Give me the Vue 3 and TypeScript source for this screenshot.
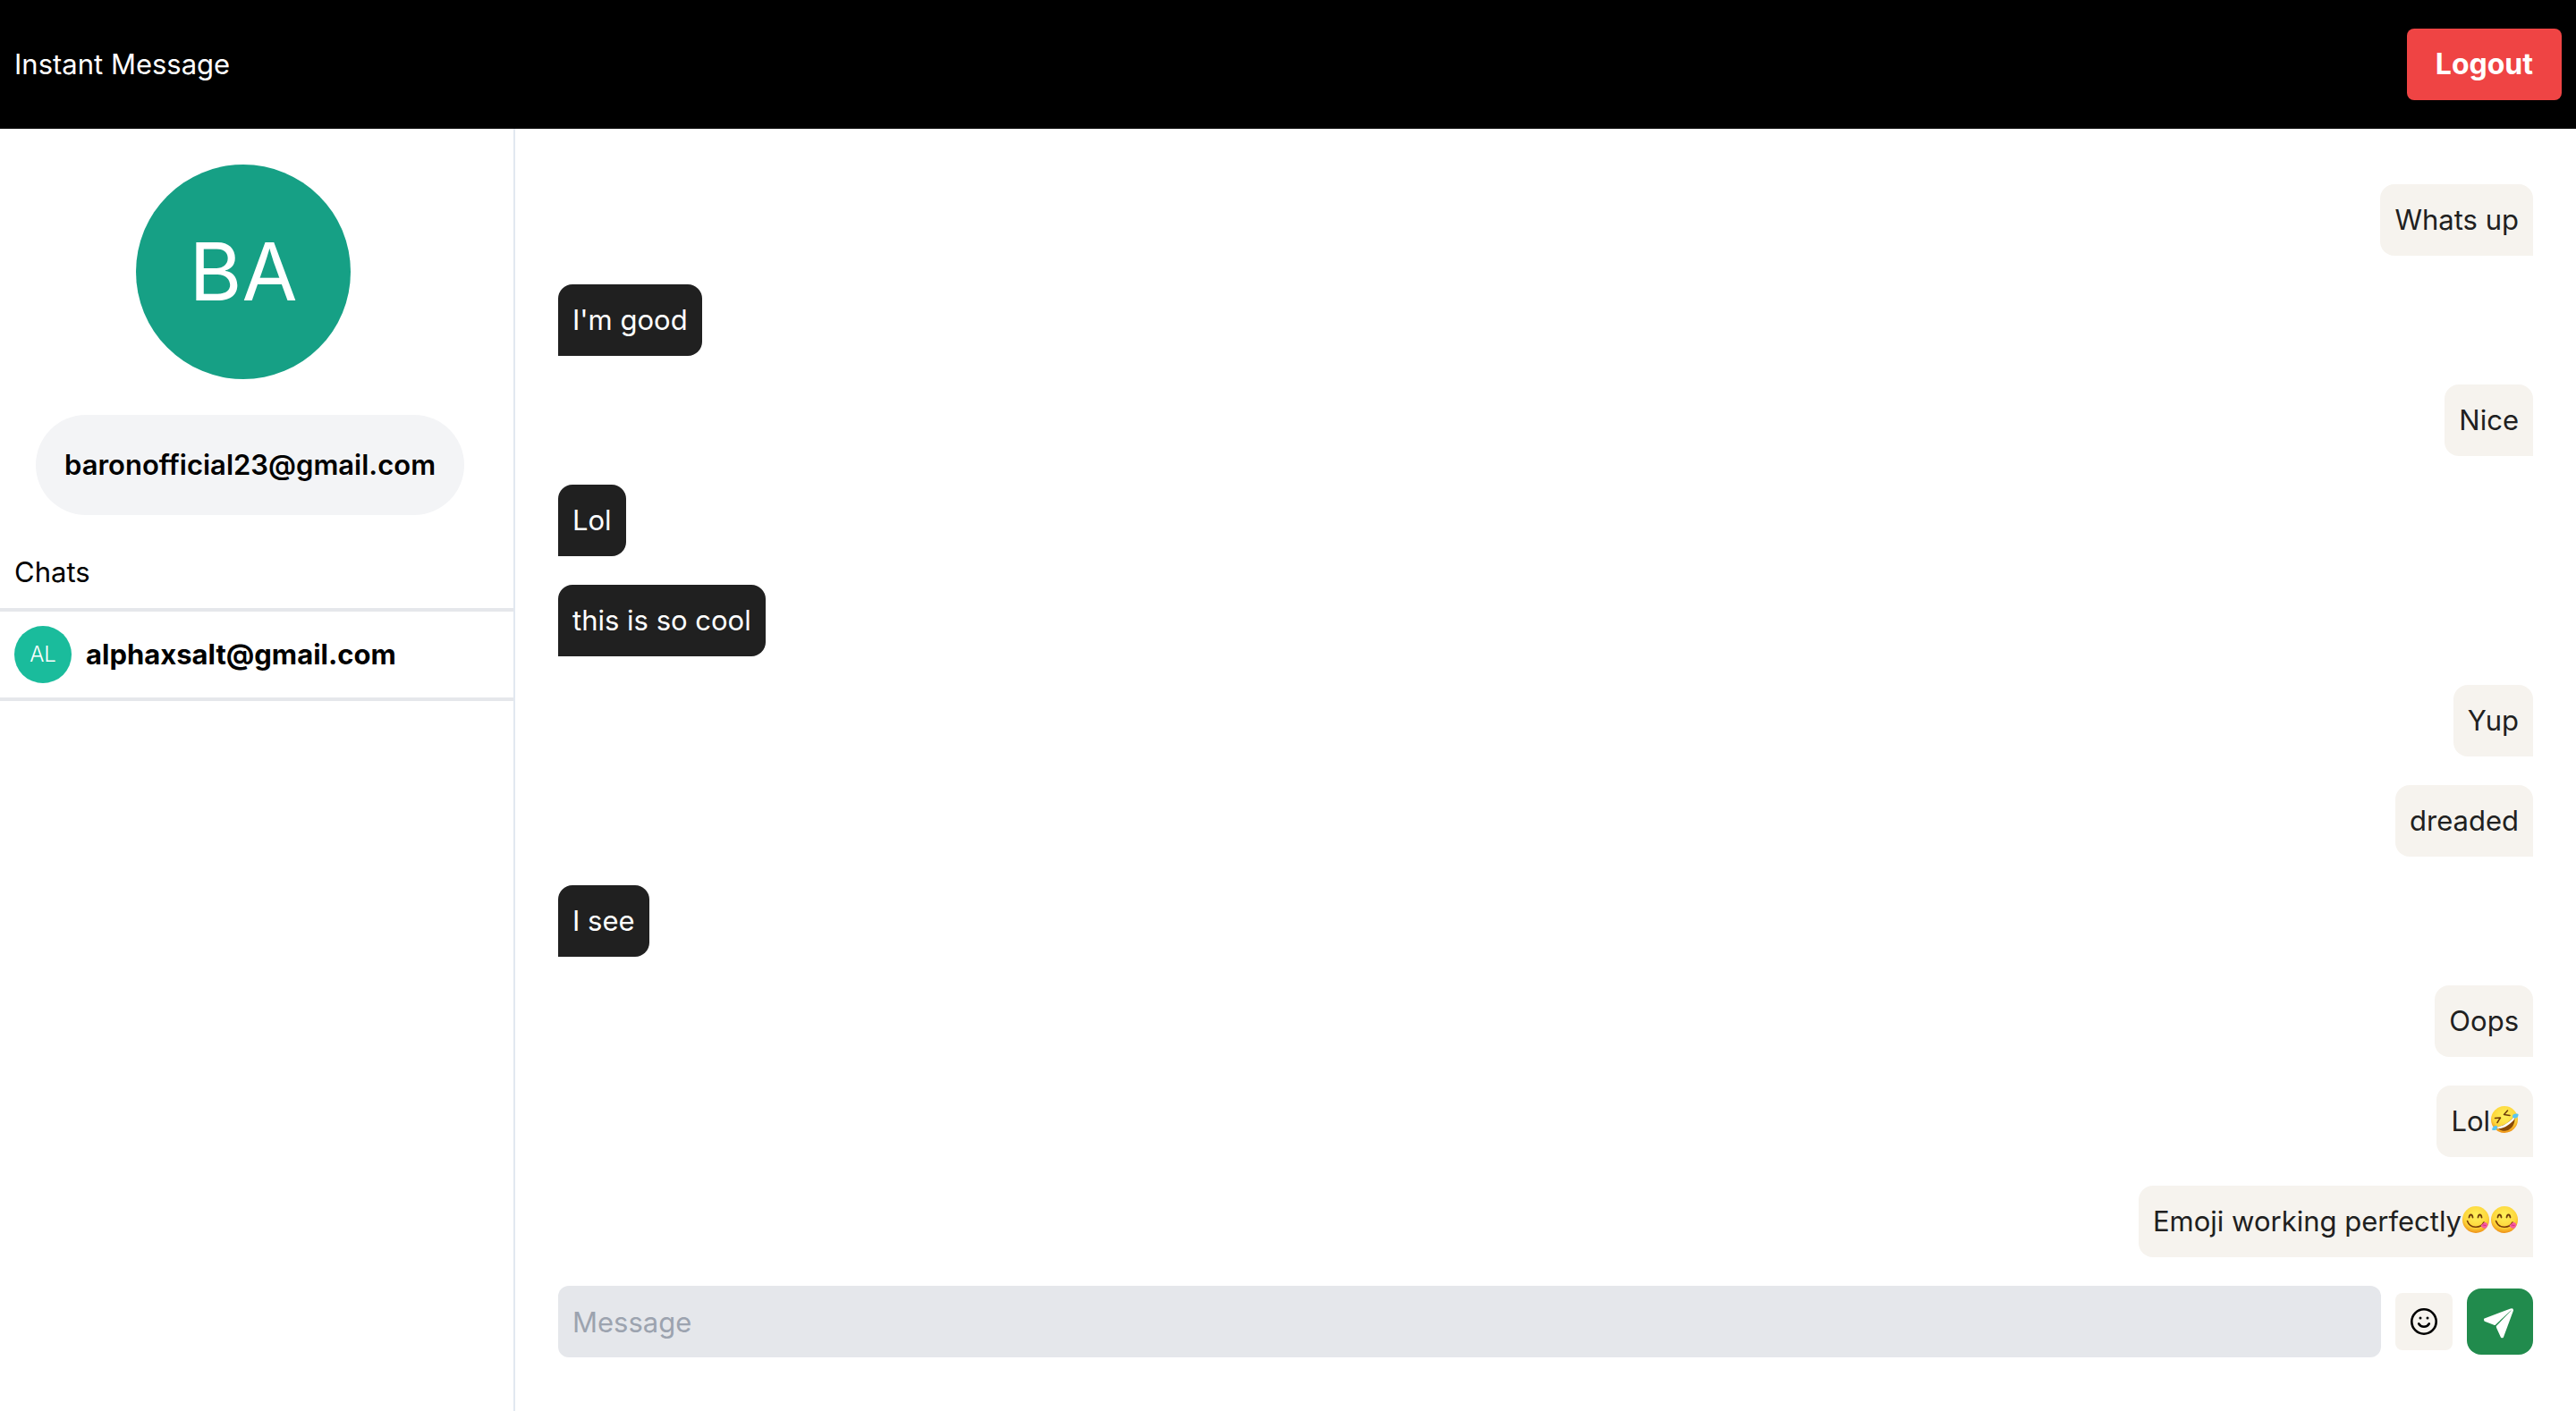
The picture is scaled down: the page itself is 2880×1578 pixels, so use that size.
<script setup lang="ts">
import { ref } from 'vue'

type Emoji = 'rofl' | 'yum'
interface Message {
  text: string
  mine: boolean
  emojis?: Emoji[]
}

const draft = ref('')
const messages: Message[] = [
  { text: 'Whats up', mine: true },
  { text: "I'm good", mine: false },
  { text: 'Nice', mine: true },
  { text: 'Lol', mine: false },
  { text: 'this is so cool', mine: false },
  { text: 'Yup', mine: true },
  { text: 'dreaded', mine: true },
  { text: 'I see', mine: false },
  { text: 'Oops', mine: true },
  { text: 'Lol', mine: true, emojis: ['rofl'] },
  { text: 'Emoji working perfectly', mine: true, emojis: ['yum', 'yum'] },
]
</script>

<template>
  <div class="app">
    <header class="topbar">
      <span>Instant Message</span>
      <button class="logout" type="button">Logout</button>
    </header>

    <div class="body">
      <aside class="sidebar">
        <div class="profile">
          <div class="avatar avatar-large">BA</div>
          <div class="email">baronofficial23@gmail.com</div>
        </div>
        <div class="chats-title">Chats</div>
        <a class="chat" href="#">
          <span class="avatar avatar-small">AL</span>
          <span>alphaxsalt@gmail.com</span>
        </a>
      </aside>

      <main class="conversation">
        <div v-for="(m, i) in messages" :key="i" class="bubble" :class="m.mine ? 'mine' : 'theirs'">
          <span>{{ m.text }}</span>
          <template v-for="(e, j) in m.emojis" :key="j">
            <svg v-if="e === 'rofl'" class="emoji" viewBox="0 0 32 32" role="img" aria-label="rolling on the floor laughing">
              <defs>
                <radialGradient id="face-rofl" cx="0.5" cy="0.35" r="0.65">
                  <stop offset="0" stop-color="#fff25a" />
                  <stop offset="0.7" stop-color="#fdd43a" />
                  <stop offset="1" stop-color="#ee8f14" />
                </radialGradient>
              </defs>
              <circle cx="16" cy="16" r="15" fill="url(#face-rofl)" />
              <path d="M5.500 14.500l6-.5-3.500 5.500M19.500 6l-4 4.500 6.500 1" fill="none" stroke="#6f3c0a" stroke-width="1.500" stroke-linecap="round" stroke-linejoin="round" />
              <path d="M7 24.500C14 24 22 19 27 12c2 7-2 15-9 16.500-4.500 1-8-1-11-4z" fill="#8a4a08" />
              <path d="M7 24.500C14 24 22 19 27 12.500l.3 2.800C23 21.500 16 25.800 9 26.300z" fill="#fff" />
              <path d="M25 12.500c0-2.500 3-3.500 6.500-2.500.500 3-2 5-4 4.500-1.500 0-2.500-.500-2.500-2zM7.500 23c-2.500-.500-5 1-5.500 4.500 2.500 1 5 .5 5.500-1 .500-1 .500-2.500 0-3.500z" fill="#59c5f2" />
            </svg>
            <svg v-else class="emoji" viewBox="0 0 32 32" role="img" aria-label="face savoring food">
              <defs>
                <radialGradient id="face-yum" cx="0.5" cy="0.35" r="0.65">
                  <stop offset="0" stop-color="#fff25a" />
                  <stop offset="0.7" stop-color="#fdd43a" />
                  <stop offset="1" stop-color="#ee8f14" />
                </radialGradient>
              </defs>
              <circle cx="16" cy="16" r="15" fill="url(#face-yum)" />
              <path d="M8.500 13.500c.5-4 3.500-4 4 0M18.500 13.500c.5-4 3.500-4 4 0" fill="none" stroke="#6f3c0a" stroke-width="1.800" stroke-linecap="round" />
              <path d="M6.500 17.500c3 8.500 14.500 9 18.500 1.500" fill="none" stroke="#7a3c08" stroke-width="1.600" stroke-linecap="round" />
              <path d="M21.500 22.500l4-3.500c2.500 0 4.500 2 3.500 4-1 3-4 3.500-5.500 2-1-.7-1.700-1.500-2-2.500z" fill="#f75b9d" />
              <path d="M24 22l3 .5" stroke="#d42f7c" stroke-width="1" stroke-linecap="round" />
            </svg>
          </template>
        </div>

        <form class="composer" @submit.prevent>
          <input v-model="draft" type="text" placeholder="Message" aria-label="Message" />
          <button class="smile" type="button" aria-label="Insert emoji">
            <svg viewBox="0 0 32 32" width="32" height="32" fill="none" stroke="#000" stroke-width="2.600">
              <circle cx="16" cy="16" r="13.700" />
              <path d="M10.200 18.400c2.400 4.500 9.200 4.500 11.600 0" stroke-linecap="round" />
              <circle cx="12" cy="12" r="1.500" fill="#000" stroke="none" />
              <circle cx="20" cy="12" r="1.500" fill="#000" stroke="none" />
            </svg>
          </button>
          <button class="send" type="submit" aria-label="Send">
            <svg viewBox="0 0 48 48" width="48" height="48" fill="#fff" stroke="#fff" stroke-width="2" stroke-linejoin="round">
              <path d="M7 21.500L35.500 10.700 18.200 27 7.200 22.700z" />
              <path d="M38 11.500L27 41.200H25.800L21 30.500 20.800 29.500z" />
              <path d="M35.500 10.700L37.500 10.200 38 11.500" />
            </svg>
          </button>
        </form>
      </main>
    </div>
  </div>
</template>

<style>
body {
  background: #fff;
}
</style>

<style scoped>
.app {
  display: flex;
  flex-direction: column;
  min-height: 100vh;
  font-family: Inter, "Liberation Sans", sans-serif;
  font-size: 31px;
  line-height: 48px;
  color: #000;
}

.app * {
  box-sizing: border-box;
}

button,
input {
  border: 0;
  font: inherit;
}

.topbar {
  display: flex;
  align-items: center;
  justify-content: space-between;
  padding: 32px 16px;
  background: #000;
  color: #fff;
}

.logout {
  padding: 16px 32px;
  border-radius: 8px;
  background: #ef4444;
  color: #fff;
  font-size: 32px;
  font-weight: 700;
}

.body {
  display: flex;
  flex: 1;
}

.sidebar {
  flex: none;
  width: 20%;
  border-right: 2px solid #e2e8f0;
}

.profile {
  display: flex;
  flex-direction: column;
  align-items: flex-start;
  gap: 40px;
  padding: 40px 40px 24px;
}

.avatar {
  display: flex;
  align-items: center;
  justify-content: center;
  flex: none;
  border-radius: 50%;
  color: #fff;
  font-weight: 400;
}

.avatar-large {
  width: 240px;
  height: 240px;
  margin-left: 112px;
  background: #16a085;
  font-size: 90px;
}

.avatar-small {
  width: 64px;
  height: 64px;
  background: #1abc9c;
  font-size: 24px;
  font-weight: 300;
}

.email {
  padding: 32px;
  border-radius: 56px;
  background: #f3f4f6;
  font-weight: 600;
}

.chats-title {
  padding: 16px;
  border-bottom: 4px solid #e5e7eb;
}

.chat {
  display: flex;
  align-items: center;
  gap: 16px;
  padding: 16px;
  border-bottom: 4px solid #e5e7eb;
  color: inherit;
  font-weight: 700;
  text-decoration: none;
}

.conversation {
  display: flex;
  flex: 1;
  flex-direction: column;
  justify-content: flex-end;
  gap: 32px;
  min-width: 0;
  padding: 32px 48px 60px;
}

.bubble {
  display: flex;
  align-items: center;
  padding: 16px;
}

.theirs {
  align-self: flex-start;
  border-radius: 16px 16px 16px 0;
  background: #202020;
  color: #fff;
}

.mine {
  align-self: flex-end;
  border-radius: 16px 16px 0 16px;
  background: #f6f3ee;
  color: #202020;
}

.emoji {
  width: 32px;
  height: 32px;
  margin-bottom: 4px;
}

.composer {
  display: flex;
  align-items: center;
  gap: 16px;
}

.composer input {
  flex: 1;
  min-width: 0;
  height: 80px;
  padding: 16px;
  border-radius: 12px;
  background: #e5e7eb;
  color: #000;
}

.composer input::placeholder {
  color: #9ca3af;
  opacity: 1;
}

.smile,
.send {
  display: flex;
  align-items: center;
  justify-content: center;
  padding: 0;
}

.smile {
  width: 64px;
  height: 64px;
  border-radius: 8px;
  background: #f6f3ee;
}

.send {
  width: 74px;
  height: 74px;
  border-radius: 16px;
  background: #218b4d;
}
</style>
